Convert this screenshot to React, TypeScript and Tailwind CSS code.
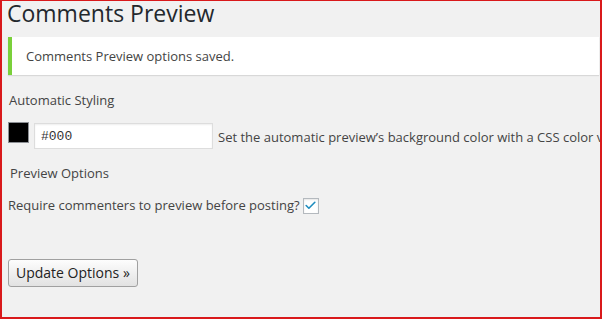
import { Check } from 'lucide-react';

export default function App() {
    return (
        <main className="w-[602px] h-[319px] overflow-hidden bg-[#f1f1f1] border-t border-l-2 border-r-2 border-b-2 border-[#d9191b] font-['Open_Sans',sans-serif] text-[13px] text-[#444]">
            <div className="pl-[5px] pr-[1px]">
                <h1 className="text-[23px] leading-[25px] font-normal text-[#23282d]">
                    Comments Preview
                </h1>

                {/* saved notice */}
                <div className="mt-[11px] ml-px h-[38px] flex items-center bg-white border-l-4 border-[#7ad03a] shadow-[0_1px_1px_rgba(0,0,0,0.1)] pl-[14px]">
                    <p className="leading-[19px]">Comments Preview options saved.</p>
                </div>

                <h3 className="mt-[16px] ml-[2px] leading-[19px]">Automatic Styling</h3>

                <div className="mt-[12px] flex items-start whitespace-nowrap">
                    <div className="ml-px w-[21px] h-[21px] bg-black border border-[#8c8f94] shrink-0" />
                    <input
                        type="text"
                        defaultValue="#000"
                        className="ml-[5px] mt-px w-[179px] h-[26px] shrink-0 bg-white border border-[#ddd] shadow-[inset_0_1px_2px_rgba(0,0,0,0.07)] px-[6px] font-['Liberation_Mono',monospace] text-[13px] text-[#333] outline-none"
                    />
                    <span className="ml-[5px] mt-[6px] leading-[19px]">
                        Set the automatic preview’s background color with a CSS color value.
                    </span>
                </div>

                <h3 className="mt-[15px] ml-[3px] leading-[19px]">Preview Options</h3>

                <div className="mt-[13px] flex items-center">
                    <span className="ml-px leading-[19px]">Require commenters to preview before posting?</span>
                    <span className="ml-[3px] w-4 h-4 flex items-center justify-center bg-white border border-[#b4b9be] shadow-[inset_0_1px_2px_rgba(0,0,0,0.1)]">
                        <Check className="w-[13px] h-[13px] text-[#1e8cbe]" strokeWidth={3} />
                    </span>
                </div>

                <button className="mt-[44px] ml-px h-[28px] px-[7px] rounded-[3px] border border-[#a0a0a0] bg-gradient-to-b from-[#fdfdfd] to-[#e2e2e2] text-[14px] text-[#222] leading-[26px]">
                    Update Options »
                </button>
            </div>
        </main>
    );
}
